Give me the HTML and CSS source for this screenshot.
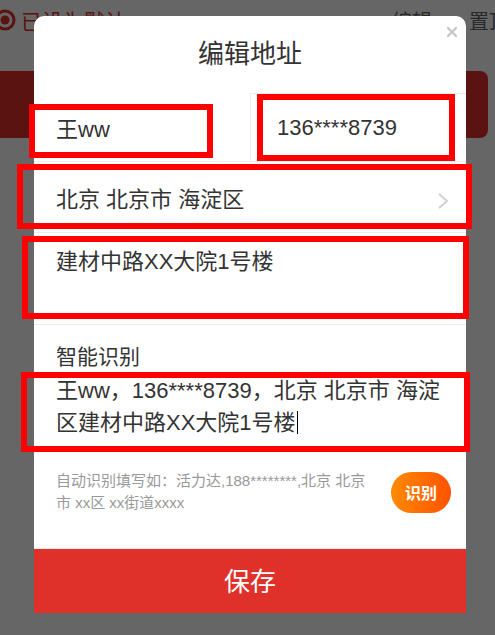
FILE: index.html
```html
<!DOCTYPE html>
<html lang="zh-CN">
<head>
    <meta charset="UTF-8">
    <meta name="viewport" content="width=device-width, initial-scale=1.0">
    <title>编辑地址</title>
    <link rel="stylesheet" href="styles.css">
</head>
<body>
    <div class="page">
        <div class="page-top">
            <div class="default-tag">
                <svg class="radio" width="24" height="24" viewBox="0 0 24 24">
                    <circle cx="12" cy="12" r="9" fill="none" stroke="currentColor" stroke-width="3"/>
                    <circle cx="12" cy="12" r="4.5" fill="currentColor"/>
                </svg>
                <span>已设为默认</span>
            </div>
            <div class="page-actions">
                <span>编辑</span>
                <span>置顶</span>
            </div>
        </div>
        <div class="page-btn"></div>
    </div>

    <div class="mask">
        <div class="dialog">
            <div class="dialog-header">
                <h2 class="dialog-title">编辑地址</h2>
                <svg class="close" width="12" height="12" viewBox="0 0 12 12">
                    <path d="M2 2l8 8M10 2l-8 8" stroke="#c8c8c8" stroke-width="2.4" stroke-linecap="round"/>
                </svg>
            </div>

            <div class="row-pair">
                <div class="cell cell-name">王ww</div>
                <div class="cell cell-phone">136****8739</div>
            </div>

            <div class="row row-region">
                <span>北京 北京市 海淀区</span>
                <svg class="arrow" width="14" height="18" viewBox="0 0 14 18">
                    <polyline points="3,2 11,9 3,16" fill="none" stroke="#d0d0d0" stroke-width="2"/>
                </svg>
            </div>

            <div class="row row-detail">建材中路XX大院1号楼</div>

            <div class="smart">
                <div class="smart-label">智能识别</div>
                <div class="smart-text">王ww，136****8739，北京 北京市 海淀区建材中路XX大院1号楼<span class="caret"></span></div>
                <div class="smart-foot">
                    <p class="smart-hint">自动识别填写如：活力达,188********,北京 北京市 xx区 xx街道xxxx</p>
                    <button class="smart-btn">识别</button>
                </div>
            </div>

            <button class="save-btn">保存</button>
        </div>
    </div>

    <!-- annotation boxes drawn on the screenshot -->
    <div class="mark mark-name"></div>
    <div class="mark mark-phone"></div>
    <div class="mark mark-region"></div>
    <div class="mark mark-detail"></div>
    <div class="mark mark-smart"></div>
</body>
</html>
```

FILE: styles.css
```css
:root {
    --red: #e0302a;
    --text: #333333;
    --muted: #999999;
    --line: #ececec;
}

* {
    margin: 0;
    padding: 0;
    box-sizing: border-box;
    font-family: "Liberation Sans", "Noto Sans CJK SC", sans-serif;
}

body {
    width: 495px;
    height: 635px;
    overflow: hidden;
    background-color: #ffffff;
    position: relative;
}

/* page behind the dialog */
.page-top {
    height: 40px;
    display: flex;
    justify-content: space-between;
    align-items: center;
}

.default-tag {
    display: flex;
    align-items: center;
    gap: 4px;
    margin-left: -7px;
    color: var(--red);
    font-size: 21px;
}

.page-actions {
    display: flex;
    gap: 37px;
    margin-right: -14px;
    color: #666666;
    font-size: 20px;
}

.page-btn {
    height: 67px;
    margin: 31px 7px 0 -8px;
    background-color: var(--red);
    border-radius: 8px;
}

/* dialog */
.mask {
    position: absolute;
    inset: 0;
    background-color: rgba(0, 0, 0, 0.6);
    padding: 16px 0 0 34px;
}

.dialog {
    width: 432px;
    background-color: #ffffff;
    border-radius: 10px 10px 0 0;
    position: relative;
    overflow: hidden;
}

.dialog-header {
    height: 77px;
    padding-top: 23px;
    text-align: center;
}

.dialog-title {
    font-size: 26px;
    line-height: 30px;
    font-weight: normal;
    color: var(--text);
}

.close {
    position: absolute;
    top: 10px;
    right: 8px;
}

.row-pair {
    display: flex;
    height: 69px;
    border-bottom: 1px solid var(--line);
}

.cell {
    display: flex;
    align-items: center;
    font-size: 22px;
    color: var(--text);
}

.cell-name {
    width: 216px;
    padding-left: 22px;
}

.cell-phone {
    flex: 1;
    padding-left: 26px;
    border-left: 1px solid var(--line);
    border-top: 1px solid var(--line);
}

.row {
    font-size: 22px;
    color: var(--text);
    padding-left: 22px;
    border-bottom: 1px solid var(--line);
}

.row-region {
    height: 71px;
    display: flex;
    align-items: center;
    justify-content: space-between;
    padding-right: 16px;
}

.arrow {
    margin-top: 8px;
}

.row-detail {
    height: 92px;
    padding-top: 17px;
    line-height: 24px;
}

.smart {
    padding: 21px 15px 0 22px;
    color: var(--text);
}

.smart-label {
    font-size: 21px;
    line-height: 22px;
}

.smart-text {
    margin-top: 7px;
    font-size: 22px;
    line-height: 32px;
    padding-right: 4px;
}

.caret {
    display: inline-block;
    width: 1px;
    height: 23px;
    margin-left: 1px;
    vertical-align: -4px;
    background-color: #000000;
}

.smart-foot {
    display: flex;
    align-items: center;
    gap: 16px;
    margin-top: 31px;
    padding-bottom: 34px;
}

.smart-hint {
    flex: 1;
    font-size: 15px;
    line-height: 22px;
    color: var(--muted);
}

.smart-btn {
    width: 60px;
    height: 41px;
    border: none;
    border-radius: 21px;
    background: linear-gradient(90deg, #ff8a00, #ff5200);
    color: #ffffff;
    font-size: 16px;
    font-weight: bold;
}

.save-btn {
    display: block;
    width: 100%;
    height: 65px;
    padding-bottom: 4px;
    border: none;
    border-top: 1px solid var(--line);
    background-color: var(--red);
    background-clip: padding-box;
    color: #ffffff;
    font-size: 26px;
}

/* red annotation frames */
.mark {
    position: absolute;
    border: 6px solid #ff0000;
}

.mark-name { left: 29px; top: 104px; width: 184px; height: 54px; }
.mark-phone { left: 257px; top: 94px; width: 198px; height: 67px; }
.mark-region { left: 17px; top: 164px; width: 455px; height: 65px; }
.mark-detail { left: 22px; top: 236px; width: 447px; height: 83px; }
.mark-smart { left: 21px; top: 372px; width: 449px; height: 80px; }
```
